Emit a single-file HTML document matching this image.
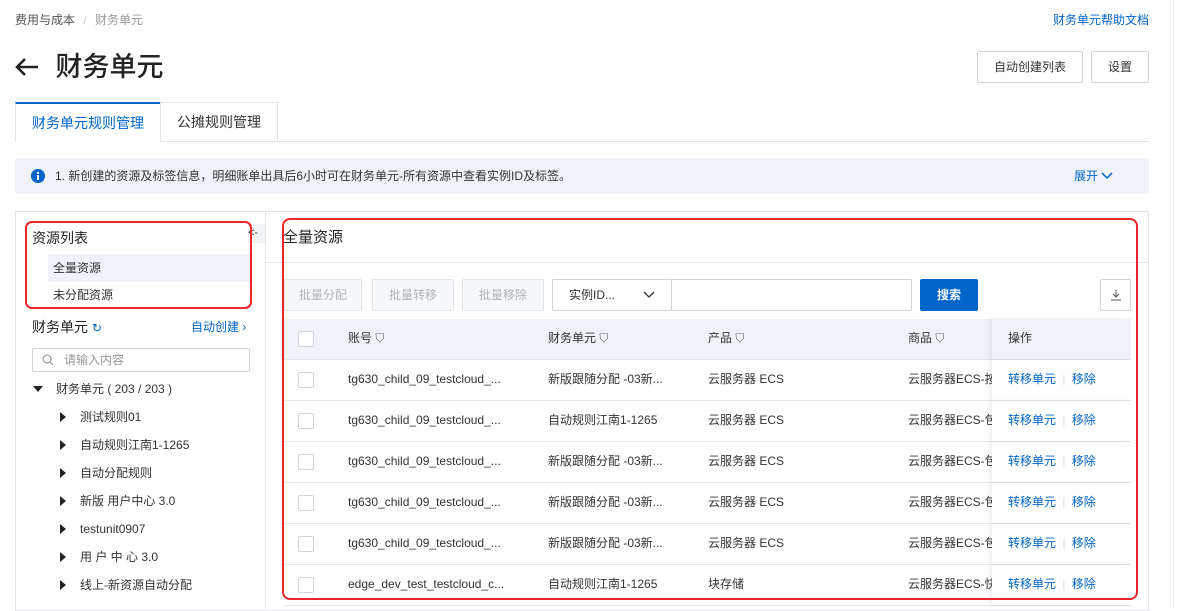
<!DOCTYPE html>
<html><head><meta charset="utf-8">
<style>
*{box-sizing:border-box;margin:0;padding:0}
body{width:1181px;height:608px;overflow:hidden;background:#fff;font-family:"Liberation Sans","Noto Sans CJK SC",sans-serif;color:#333;font-size:12px;line-height:16px;position:relative}
.a{position:absolute;white-space:nowrap}
.blue{color:#0064c8}
.btn{position:absolute;border:1px solid #d1d5d9;background:#fff;border-radius:2px;text-align:center;color:#333;font-size:12px}
.gbtn{position:absolute;border:1px solid #e3e5e8;background:#f7f8fa;color:#b0b4b9;text-align:center;font-size:12px;border-radius:2px;height:32px;line-height:30px;top:279px}
.row{position:absolute;left:284px;width:847px;height:41px;border-bottom:1px solid #e5e7ea}
.cb{position:absolute;left:14px;top:12px;width:16px;height:16px;border:1px solid #d1d5d9;border-radius:2px;background:#fff}
.cell{position:absolute;top:11px;font-size:12px;color:#333;line-height:16px;white-space:nowrap}
.cell.blue{color:#0064c8}
.ops{position:absolute;left:708px;top:0;width:139px;height:40px;background:#fff;box-shadow:-3px 0 4px rgba(0,0,0,.06)}
.tri{position:absolute;width:0;height:0;border-top:5px solid transparent;border-bottom:5px solid transparent;border-left:6px solid #222}
.tree{position:absolute;left:80px;font-size:12px;color:#333;line-height:16px}
</style></head><body>
<div class="a" style="left:15px;top:12px;color:#555">费用与成本 <span style="color:#ccc;margin:0 5px">/</span> <span style="color:#999">财务单元</span></div>
<div class="a blue" style="left:1053px;top:12px">财务单元帮助文档</div>
<div class="a" style="left:14px;top:50px;font-size:27px;line-height:34px;color:#222">
<svg width="26" height="20" viewBox="0 0 26 20" style="vertical-align:-1px"><path d="M24 10H3M11 2L3 10l8 8" stroke="#222" stroke-width="2.6" fill="none"/></svg>
<span style="margin-left:8px;font-weight:500">财务单元</span></div>
<div class="btn" style="left:977px;top:51px;width:106px;height:32px;line-height:30px">自动创建列表</div>
<div class="btn" style="left:1091px;top:51px;width:58px;height:32px;line-height:30px">设置</div>
<div class="a" style="left:15px;top:141px;width:1134px;height:1px;background:#e3e5e8"></div>
<div class="a" style="left:15px;top:102px;width:146px;height:40px;background:#fff;border:1px solid #e3e5e8;border-top:2px solid #0064c8;border-bottom:none;text-align:center;line-height:38px;font-size:14px;color:#0064c8">财务单元规则管理</div>
<div class="a" style="left:160px;top:102px;width:118px;height:40px;border:1px solid #e3e5e8;border-bottom:none;text-align:center;line-height:38px;font-size:14px;color:#333">公摊规则管理</div>
<div class="a" style="left:15px;top:158px;width:1134px;height:36px;background:#eff2f6;border-radius:2px"></div>
<svg class="a" style="left:31px;top:169px" width="14" height="14"><circle cx="7" cy="7" r="7" fill="#0064c8"/><rect x="6" y="6" width="2" height="5" fill="#fff"/><rect x="6" y="3" width="2" height="2" fill="#fff"/></svg>
<div class="a" style="left:55px;top:168px;color:#333">1. 新创建的资源及标签信息，明细账单出具后6小时可在财务单元-所有资源中查看实例ID及标签。</div>
<div class="a blue" style="left:1074px;top:168px">展开 <svg width="12" height="8" viewBox="0 0 12 8"><path d="M1 1l5 5 5-5" stroke="#0064c8" stroke-width="1.5" fill="none"/></svg></div>
<div class="a" style="left:1173px;top:0;width:1px;height:608px;background:#eceef0"></div>
<!-- panels -->
<div class="a" style="left:15px;top:211px;width:1134px;height:400px;border:1px solid #e3e5e8"></div>
<div class="a" style="left:265px;top:211px;width:1px;height:400px;background:#e3e5e8"></div>
<div class="a" style="left:248px;top:224px;width:17px;height:19px;background:#f2f3f5;font-size:11px;line-height:19px;color:#333">&lt;-</div>
<div class="a" style="left:32px;top:229px;font-size:14px;line-height:18px;color:#222">资源列表</div>
<div class="a" style="left:48px;top:254px;width:202px;height:28px;background:#eff2f6"></div>
<div class="a" style="left:53px;top:260px">全量资源</div>
<div class="a" style="left:53px;top:287px">未分配资源</div>
<div class="a" style="left:32px;top:318px;font-size:14px;line-height:18px;color:#222">财务单元 <span class="blue" style="font-size:12px">↻</span></div>
<div class="a blue" style="left:191px;top:319px">自动创建 ›</div>
<div class="a" style="left:32px;top:348px;width:218px;height:24px;border:1px solid #d1d5d9;border-radius:2px"></div>
<svg class="a" style="left:42px;top:354px" width="12" height="12"><circle cx="5" cy="5" r="4" stroke="#888" fill="none"/><path d="M8 8l3 3" stroke="#888"/></svg>
<div class="a" style="left:64px;top:352px;color:#999">请输入内容</div>
<div class="a" style="left:33px;top:386px;width:0;height:0;border-left:5px solid transparent;border-right:5px solid transparent;border-top:6px solid #222"></div>
<div class="a" style="left:56px;top:381px">财务单元 ( 203 / 203 )</div>
<div class="tri" style="left:60px;top:412px"></div><div class="tree" style="top:409px">测试规则01</div>
<div class="tri" style="left:60px;top:440px"></div><div class="tree" style="top:437px">自动规则江南1-1265</div>
<div class="tri" style="left:60px;top:468px"></div><div class="tree" style="top:465px">自动分配规则</div>
<div class="tri" style="left:60px;top:496px"></div><div class="tree" style="top:493px">新版 用户中心 3.0</div>
<div class="tri" style="left:60px;top:524px"></div><div class="tree" style="top:521px">testunit0907</div>
<div class="tri" style="left:60px;top:552px"></div><div class="tree" style="top:549px">用 户 中 心 3.0</div>
<div class="tri" style="left:60px;top:580px"></div><div class="tree" style="top:577px">线上-新资源自动分配</div>
<!-- right -->
<div class="a" style="left:283px;top:229px;font-size:15px;line-height:18px;color:#222">全量资源</div>
<div class="a" style="left:266px;top:262px;width:882px;height:1px;background:#e3e5e8"></div>
<div class="gbtn" style="left:284px;width:78px">批量分配</div>
<div class="gbtn" style="left:372px;width:82px">批量转移</div>
<div class="gbtn" style="left:462px;width:82px">批量移除</div>
<div class="btn" style="left:552px;top:279px;width:120px;height:32px;line-height:30px;text-align:left;padding-left:16px">实例ID...<svg style="position:absolute;left:90px;top:11px" width="12" height="8"><path d="M1 1l5 5 5-5" stroke="#333" stroke-width="1.3" fill="none"/></svg></div>
<div class="btn" style="left:671px;top:279px;width:241px;height:32px"></div>
<div class="a" style="left:920px;top:279px;width:58px;height:32px;background:#0064c8;border-radius:2px;color:#fff;font-weight:bold;text-align:center;line-height:32px">搜索</div>
<div class="btn" style="left:1100px;top:279px;width:31px;height:32px"><svg style="margin-top:9px" width="12" height="12"><path d="M6 1v7M3 5l3 3 3-3M1 11h10" stroke="#555" fill="none"/></svg></div>
<div class="a" style="left:284px;top:319px;width:847px;height:41px;background:#eff2f6;border-bottom:1px solid #e3e5e8"></div>
<div class="cb" style="left:298px;top:331px"></div>
<div class="a" style="left:348px;top:330px">账号 <span style="color:#666">⛉</span></div>
<div class="a" style="left:548px;top:330px">财务单元 <span style="color:#666">⛉</span></div>
<div class="a" style="left:708px;top:330px">产品 <span style="color:#666">⛉</span></div>
<div class="a" style="left:908px;top:330px">商品 <span style="color:#666">⛉</span></div>
<div class="a" style="left:992px;top:319px;width:139px;height:40px;background:#eff2f6;box-shadow:-3px 0 4px rgba(0,0,0,.06)"></div>
<div class="a" style="left:1008px;top:330px">操作</div>

<div class="row" style="top:360px"><div class="cb"></div><div class="cell" style="left:64px">tg630_child_09_testcloud_...</div><div class="cell" style="left:264px">新版跟随分配 -03新...</div><div class="cell" style="left:424px">云服务器 ECS</div><div class="cell" style="left:624px">云服务器ECS-按</div><div class="ops"><div class="cell blue" style="left:16px">转移单元 <span style="color:#ddd;margin:0 3px">|</span> 移除</div></div></div>
<div class="row" style="top:401px"><div class="cb"></div><div class="cell" style="left:64px">tg630_child_09_testcloud_...</div><div class="cell" style="left:264px">自动规则江南1-1265</div><div class="cell" style="left:424px">云服务器 ECS</div><div class="cell" style="left:624px">云服务器ECS-包</div><div class="ops"><div class="cell blue" style="left:16px">转移单元 <span style="color:#ddd;margin:0 3px">|</span> 移除</div></div></div>
<div class="row" style="top:442px"><div class="cb"></div><div class="cell" style="left:64px">tg630_child_09_testcloud_...</div><div class="cell" style="left:264px">新版跟随分配 -03新...</div><div class="cell" style="left:424px">云服务器 ECS</div><div class="cell" style="left:624px">云服务器ECS-包</div><div class="ops"><div class="cell blue" style="left:16px">转移单元 <span style="color:#ddd;margin:0 3px">|</span> 移除</div></div></div>
<div class="row" style="top:483px"><div class="cb"></div><div class="cell" style="left:64px">tg630_child_09_testcloud_...</div><div class="cell" style="left:264px">新版跟随分配 -03新...</div><div class="cell" style="left:424px">云服务器 ECS</div><div class="cell" style="left:624px">云服务器ECS-包</div><div class="ops"><div class="cell blue" style="left:16px">转移单元 <span style="color:#ddd;margin:0 3px">|</span> 移除</div></div></div>
<div class="row" style="top:524px"><div class="cb"></div><div class="cell" style="left:64px">tg630_child_09_testcloud_...</div><div class="cell" style="left:264px">新版跟随分配 -03新...</div><div class="cell" style="left:424px">云服务器 ECS</div><div class="cell" style="left:624px">云服务器ECS-包</div><div class="ops"><div class="cell blue" style="left:16px">转移单元 <span style="color:#ddd;margin:0 3px">|</span> 移除</div></div></div>
<div class="row" style="top:565px"><div class="cb"></div><div class="cell" style="left:64px">edge_dev_test_testcloud_c...</div><div class="cell" style="left:264px">自动规则江南1-1265</div><div class="cell" style="left:424px">块存储</div><div class="cell" style="left:624px">云服务器ECS-快</div><div class="ops"><div class="cell blue" style="left:16px">转移单元 <span style="color:#ddd;margin:0 3px">|</span> 移除</div></div></div>

<!-- red highlight boxes -->
<div class="a" style="left:25px;top:221px;width:227px;height:88px;border:2.5px solid #e8262b;border-radius:7px"></div>
<div class="a" style="left:282px;top:218px;width:856px;height:382px;border:2.5px solid #e8262b;border-radius:8px"></div>
</body></html>
